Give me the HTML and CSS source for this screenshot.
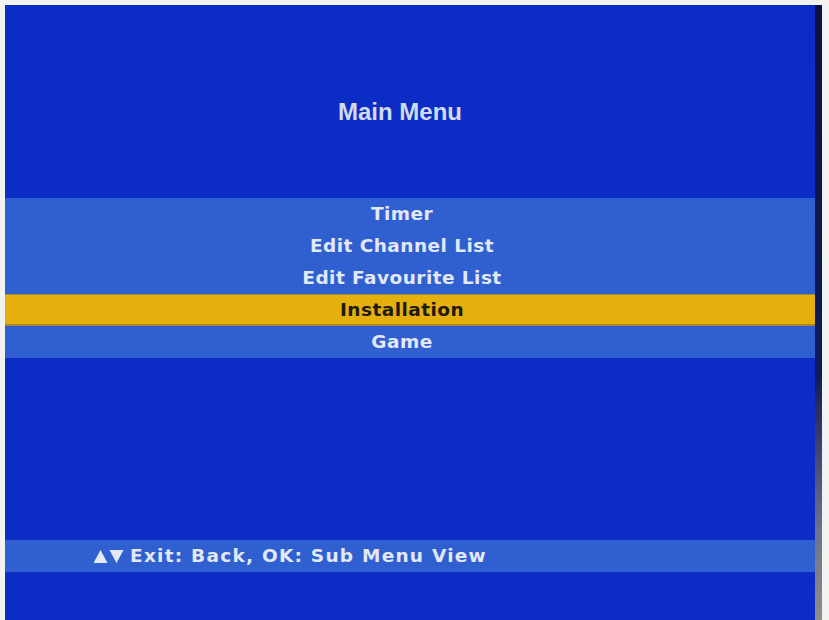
FILE: index.html
```html
<!DOCTYPE html>
<html>
<head>
<meta charset="utf-8">
<link rel="stylesheet" href="styles.css">
</head>
<body>
<div class="frame">
  <div class="screen">
    <h1 class="title">Main Menu</h1>
    <ul class="menu">
      <li class="item">Timer</li>
      <li class="item">Edit Channel List</li>
      <li class="item">Edit Favourite List</li>
      <li class="item selected">Installation</li>
      <li class="item">Game</li>
    </ul>
    <div class="spacer"></div>
    <div class="help">
      <span class="arrows">
        <svg class="tri" width="15" height="15" viewBox="0 0 15 15"><polygon points="7.5,1 14.5,14 0.5,14" fill="#e4e8f4"/></svg>
        <svg class="tri" width="15" height="15" viewBox="0 0 15 15"><polygon points="0.5,1 14.5,1 7.5,14" fill="#e4e8f4"/></svg>
      </span>
      <span class="help-text">Exit: Back, OK: Sub Menu View</span>
    </div>
    <div class="bottom"></div>
  </div>
  <div class="edge"></div>
</div>
</body>
</html>
```

FILE: styles.css
```css
html, body {
  margin: 0;
  padding: 0;
  background: #f2f2f0;
}
body {
  width: 829px;
  height: 620px;
  overflow: hidden;
  font-family: "DejaVu Sans", "Liberation Sans", sans-serif;
}
.frame {
  display: flex;
  padding: 5px 0 0 5px;
  height: 615px;
}
.screen {
  width: 810px;
  height: 615px;
  background: #0c2cc6;
  display: flex;
  flex-direction: column;
}
.edge {
  width: 7px;
  height: 615px;
  background: linear-gradient(#0a1240 0%, #101a58 60%, #6c7090 85%, #8c8e88 100%);
}
.title {
  margin: 87px 0 0 0;
  height: 40px;
  line-height: 40px;
  text-align: center;
  font-family: "Liberation Sans", Arial, sans-serif;
  font-weight: bold;
  font-size: 24px;
  color: #d0dbef;
  padding-right: 20px;
}
.menu {
  list-style: none;
  margin: 66px 0 0 0;
  padding: 0;
  background: #3060d0;
}
.item {
  height: 32px;
  line-height: 32px;
  text-align: center;
  font-weight: bold;
  font-size: 18.5px;
  letter-spacing: 0.45px;
  color: #e2e8f6;
  padding-right: 16px;
}
.item.selected {
  background: #e6b00c;
  color: #1e1a10;
  box-shadow: inset 0 1px 0 #9c8a40, inset 0 -2px 0 #a8842a;
}
.spacer {
  height: 182px;
}
.help {
  height: 32px;
  background: #3060d0;
  display: flex;
  align-items: center;
  padding-left: 88px;
  gap: 6px;
}
.arrows {
  display: flex;
  gap: 1px;
  align-items: center;
}
.tri {
  display: block;
}
.help-text {
  font-weight: bold;
  font-size: 18.5px;
  letter-spacing: 1.25px;
  color: #e2e8f6;
  line-height: 32px;
}
.bottom {
  flex: 1;
}
```
